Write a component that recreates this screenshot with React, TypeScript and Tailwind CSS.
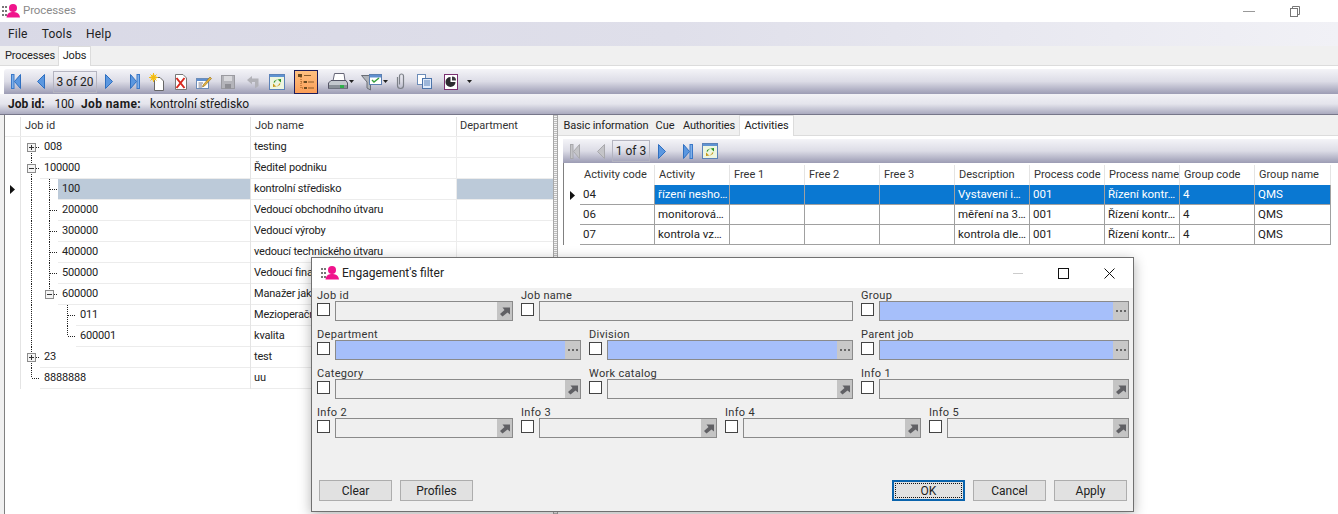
import React from 'react';

// ---------- icons ----------
const AppIcon = () => (
    <svg width="18" height="14" viewBox="0 0 18 14" className="shrink-0">
        <g fill="#777">
            <rect x="0" y="2" width="2" height="2" />
            <rect x="3" y="2" width="2" height="2" />
            <rect x="0" y="6" width="2" height="2" />
            <rect x="3" y="6" width="2" height="2" />
            <rect x="0" y="10" width="2" height="2" />
            <rect x="3" y="10" width="2" height="2" />
        </g>
        <circle cx="11" cy="4" r="4" fill="#f0148c" />
        <path d="M4.5 13.5 C5 9 8 8 11 8 C14 8 17.5 9 18 13.5 Z" fill="#f0148c" />
    </svg>
);

const NavFirst = ({ off }: { off?: boolean }) => (
    <svg width="10" height="15" viewBox="0 0 10 15">
        <rect x="0.5" y="0.5" width="2.5" height="14" fill={off ? '#c4c4c8' : '#7fb0ea'} stroke={off ? '#a8a8ac' : '#3a78c8'} />
        <path d="M9.5 0.5 L3.5 7.5 L9.5 14.5 Z" fill={off ? '#c4c4c8' : '#5b97e0'} stroke={off ? '#a8a8ac' : '#2f6fc0'} />
    </svg>
);
const NavPrev = ({ off }: { off?: boolean }) => (
    <svg width="8" height="15" viewBox="0 0 8 15">
        <path d="M7.5 0.5 L0.5 7.5 L7.5 14.5 Z" fill={off ? '#c4c4c8' : '#5b97e0'} stroke={off ? '#a8a8ac' : '#2f6fc0'} />
    </svg>
);
const NavNext = () => (
    <svg width="8" height="15" viewBox="0 0 8 15">
        <path d="M0.5 0.5 L7.5 7.5 L0.5 14.5 Z" fill="#5b97e0" stroke="#2f6fc0" />
    </svg>
);
const NavLast = () => (
    <svg width="10" height="15" viewBox="0 0 10 15">
        <path d="M0.5 0.5 L6.5 7.5 L0.5 14.5 Z" fill="#5b97e0" stroke="#2f6fc0" />
        <rect x="7" y="0.5" width="2.5" height="14" fill="#7fb0ea" stroke="#3a78c8" />
    </svg>
);
const NewIcon = () => (
    <svg width="16" height="18" viewBox="0 0 16 18">
        <path d="M5.5 4.5 H11 L14.5 8 V17.5 H5.5 Z" fill="#fff" stroke="#666" />
        <circle cx="4.5" cy="4.5" r="3" fill="#f7d23a" />
        <path d="M4.5 0 V9 M0 4.5 H9 M1.5 1.5 L7.5 7.5 M7.5 1.5 L1.5 7.5" stroke="#f2b915" />
    </svg>
);
const DeleteIcon = () => (
    <svg width="13" height="16" viewBox="0 0 13 16">
        <path d="M1.5 0.5 H9 L12.5 4 V15.5 H1.5 Z" fill="#fff" stroke="#777" />
        <path d="M2.5 4 L10.5 14 M10.5 4 L2.5 14" stroke="#d8281e" strokeWidth="2" />
    </svg>
);
const EditIcon = () => (
    <svg width="16" height="14" viewBox="0 0 16 14">
        <rect x="0.5" y="3.5" width="12" height="10" fill="#fff" stroke="#6c8cb8" />
        <rect x="1" y="4" width="11" height="2" fill="#5f8fd0" />
        <path d="M2.5 8 H7 M2.5 10 H6 M2.5 12 H6" stroke="#778" />
        <path d="M7 10 L14 2 L15.5 3.5 L8.5 11 L6.5 12 Z" fill="#e8b43a" stroke="#8a6a20" strokeWidth="0.6" />
    </svg>
);
const SaveIcon = () => (
    <svg width="14" height="14" viewBox="0 0 14 14">
        <rect x="0.5" y="0.5" width="13" height="13" fill="#b4b4ba" stroke="#9a9aa0" />
        <rect x="3" y="1" width="8" height="5" fill="#d8d8dc" />
        <rect x="4" y="9" width="6" height="4.5" fill="#8e8e94" />
    </svg>
);
const UndoIcon = () => (
    <svg width="14" height="14" viewBox="0 0 14 14">
        <path d="M1 5 L6 1 V3.5 H12.5 V11 L9 13.5 V7 H6 V9.5 Z" fill="#b2b2b8" />
    </svg>
);
const RefreshIcon = () => (
    <svg width="16" height="16" viewBox="0 0 16 16">
        <rect x="0.5" y="0.5" width="15" height="15" fill="#eef6e0" stroke="#5b82b8" />
        <rect x="1" y="1" width="14" height="2" fill="#5f93d2" />
        <path d="M4.5 8.5 A3.5 3.5 0 0 1 10 6.5 L8.5 5.5 L12 5 L12 8.5 L10.8 7.5 A2.5 2.5 0 0 0 6 8.5 Z" fill="#2e9428" />
        <path d="M11.5 9.5 A3.5 3.5 0 0 1 6 11.5 L7.5 12.5 L4 13 L4 9.5 L5.2 10.5 A2.5 2.5 0 0 0 10 9.5 Z" fill="#c89a18" />
    </svg>
);
const TreeIcon = () => (
    <svg width="20" height="20" viewBox="0 0 20 20">
        <path d="M5 5 V16 H8 M5 10 H8" stroke="#9a5a20" strokeDasharray="1 1" fill="none" />
        <rect x="2" y="2" width="4" height="3" fill="#6a4a20" />
        <rect x="8" y="9" width="3" height="2" fill="#6a4a20" />
        <rect x="8" y="15" width="3" height="2" fill="#6a4a20" />
        <path d="M8 3.5 H15 M12 10 H18 M12 16 H18" stroke="#8a5a28" />
    </svg>
);
const PrinterIcon = () => (
    <svg width="20" height="17" viewBox="0 0 20 17">
        <path d="M6.5 0.5 H16 L17 8 H5 Z" fill="#fff" stroke="#667" />
        <path d="M3 7.5 H18 L19.5 10 V15.5 H0.5 V10 Z" fill="#c4c8ce" stroke="#556" />
        <rect x="1" y="12" width="18" height="3.5" fill="#8a9098" />
        <rect x="12" y="12" width="4" height="3" fill="#2fb04a" />
    </svg>
);
const FilterIcon = () => (
    <svg width="22" height="18" viewBox="0 0 22 18">
        <path d="M0.5 2.5 H15 L9.5 9 V17 L6 15 V9 Z" fill="#b0b4ba" stroke="#6a6e76" />
        <rect x="8.5" y="1.5" width="12" height="10" fill="#fff" stroke="#5b7fb0" />
        <rect x="9" y="2" width="11" height="2.5" fill="#5f8fd0" />
        <path d="M11 7 L13 9 L18 5" stroke="#35a03a" strokeWidth="1.4" fill="none" />
    </svg>
);
const ClipIcon = () => (
    <svg width="9" height="17" viewBox="0 0 9 17">
        <path d="M1.5 4 V12.5 A3 3 0 0 0 7.5 12.5 V3 A2 2 0 0 0 3.5 3 V11.5" fill="none" stroke="#7c8088" strokeWidth="1.2" />
    </svg>
);
const CopyIcon = () => (
    <svg width="15" height="15" viewBox="0 0 15 15">
        <rect x="0.5" y="0.5" width="8" height="10" fill="#fff" stroke="#6c8cb8" />
        <rect x="5.5" y="4.5" width="9" height="10" fill="#dfeafa" stroke="#4c74aa" />
        <path d="M7 7 H13 M7 9 H13 M7 11 H13" stroke="#5b82b8" />
    </svg>
);
const PieIcon = () => (
    <svg width="14" height="16" viewBox="0 0 14 16">
        <rect x="0.5" y="0.5" width="13" height="15" fill="#fff" stroke="#7a2f70" />
        <path d="M6.5 3 A5 5 0 1 0 11.5 8 H6.5 Z" fill="#2c2c30" />
        <path d="M8 2.5 A4 4 0 0 1 12 6.5 H8 Z" fill="#3c3c40" />
    </svg>
);
const Caret = () => (
    <svg width="5" height="3" viewBox="0 0 5 3" className="shrink-0">
        <path d="M0 0 H5 L2.5 3 Z" fill="#222" />
    </svg>
);
const RowMark = () => (
    <svg width="5" height="9" viewBox="0 0 5 9">
        <path d="M0 0 L5 4.5 L0 9 Z" fill="#111" />
    </svg>
);
const PickArrow = () => (
    <svg width="12" height="11" viewBox="0 0 12 11">
        <path d="M1 8 L5.5 4 L3.5 1.5 H11 V8.5 L8.5 6.5 L3.5 10.5 Z" fill="#606064" />
    </svg>
);
const CloseGlyph = () => (
    <svg width="11" height="11" viewBox="0 0 11 11">
        <path d="M0.5 0.5 L10.5 10.5 M10.5 0.5 L0.5 10.5" stroke="#111" />
    </svg>
);
const RestoreGlyph = () => (
    <svg width="10" height="11" viewBox="0 0 10 11">
        <path d="M2.5 2.5 V0.5 H9.5 V8.5 H7.5" fill="none" stroke="#777" />
        <rect x="0.5" y="2.5" width="7" height="8" fill="none" stroke="#777" />
    </svg>
);

// ---------- toolbar bits ----------
const barBg = 'bg-gradient-to-b from-[#f4f4f8] via-[#dcdce6] to-[#9c9cb4]';

const Pager = ({ text, width }: { text: string; width: string }) => (
    <div className={`flex h-[22px] items-center justify-center whitespace-nowrap border border-[#b4b4c0] text-[12px] text-[#222] ${width}`}>{text}</div>
);

// ---------- tree grid ----------
type TreeRow = {
    id: string;
    name: string;
    level: number;
    lines: number[]; // x of vertical guide lines running through the row
    box?: '+' | '-';
    end?: number; // guide ending at the middle of the row
    start?: number; // guide starting at the middle of the row
};

const treeRows: TreeRow[] = [
    { id: '008', name: 'testing', level: 0, lines: [], start: 10, box: '+' },
    { id: '100000', name: 'Ředitel podniku', level: 0, lines: [10], start: 28, box: '-' },
    { id: '100', name: 'kontrolní středisko', level: 1, lines: [10, 28] },
    { id: '200000', name: 'Vedoucí obchodního útvaru', level: 1, lines: [10, 28] },
    { id: '300000', name: 'Vedoucí výroby', level: 1, lines: [10, 28] },
    { id: '400000', name: 'vedoucí technického útvaru', level: 1, lines: [10, 28] },
    { id: '500000', name: 'Vedoucí finančního útvaru', level: 1, lines: [10, 28] },
    { id: '600000', name: 'Manažer jakosti', level: 1, lines: [10], end: 28, box: '-' },
    { id: '011', name: 'Mezioperační kontrola', level: 2, lines: [10, 46] },
    { id: '600001', name: 'kvalita', level: 2, lines: [10], end: 46 },
    { id: '23', name: 'test', level: 0, lines: [10], box: '+' },
    { id: '8888888', name: 'uu', level: 0, lines: [], end: 10 },
];

const TreeGuide = ({ row }: { row: TreeRow }) => {
    const w = 19 + row.level * 18;
    const x = 10 + row.level * 18;
    return (
        <svg width={w} height="21" viewBox={`0 0 ${w} 21`} className="shrink-0">
            <g stroke="#222" strokeDasharray="1 1" fill="none" shapeRendering="crispEdges">
                {row.lines.map((l) => (
                    <path key={l} d={`M${l}.5 0 V21`} />
                ))}
                {row.end !== undefined && <path d={`M${row.end}.5 0 V10`} />}
                {row.start !== undefined && <path d={`M${row.start}.5 10 V21`} />}
                <path d={`M${x}.5 10.5 H${w}`} />
            </g>
            {row.box && (
                <g shapeRendering="crispEdges">
                    <rect x={x - 4 + 0.5} y="6.5" width="8" height="8" fill="#f4f4f4" stroke="#8c8c8c" />
                    <path d={`M${x - 2} 10.5 H${x + 3}`} stroke="#333" />
                    {row.box === '+' && <path d={`M${x}.5 8 V13`} stroke="#333" />}
                </g>
            )}
        </svg>
    );
};

// ---------- activities grid ----------
const actCols = ['Activity code', 'Activity', 'Free 1', 'Free 2', 'Free 3', 'Description', 'Process code', 'Process name', 'Group code', 'Group name'];
const actRows = [
    ['04', 'řízení nesho…', '', '', '', 'Vystavení i…', '001', 'Řízení kontr…', '4', 'QMS'],
    ['06', 'monitorová…', '', '', '', 'měření na 3…', '001', 'Řízení kontr…', '4', 'QMS'],
    ['07', 'kontrola vz…', '', '', '', 'kontrola dle…', '001', 'Řízení kontr…', '4', 'QMS'],
];

// ---------- dialog ----------
const Field = ({ label, width, kind }: { label: string; width: string; kind: 'arrow' | 'dots' | 'none' }) => (
    <div className={`flex flex-col ${width}`}>
        <div className="h-[13px] whitespace-nowrap text-[11px] leading-[15px] tracking-[0.3px] text-[#333]">{label}</div>
        <div className="flex h-[20px] gap-[5px]">
            <div className="mt-[2px] h-[13px] w-[13px] shrink-0 border border-[#444] bg-white" />
            <div className={`flex h-[20px] min-w-0 flex-1 justify-end border border-[#8a8a8a] ${kind === 'dots' ? 'bg-[#a6bffa]' : 'bg-[#efefef]'}`}>
                {kind === 'arrow' && (
                    <div className="flex w-[15px] items-center justify-center bg-[#c4c4c4]">
                        <PickArrow />
                    </div>
                )}
                {kind === 'dots' && (
                    <div className="flex w-[15px] items-center justify-center gap-[2px] bg-[#c8c8c8]">
                        <span className="h-[2px] w-[2px] bg-[#666]" />
                        <span className="h-[2px] w-[2px] bg-[#666]" />
                        <span className="h-[2px] w-[2px] bg-[#666]" />
                    </div>
                )}
            </div>
        </div>
    </div>
);

const DlgButton = ({ children }: { children: React.ReactNode }) => (
    <button className="h-[21px] w-[73px] border border-[#adadad] bg-[#e1e1e1] text-[12px] leading-none text-[#222]">{children}</button>
);

const FilterDialog = () => (
    <div className="absolute left-[311px] top-[257px] flex h-[255px] w-[823px] flex-col border border-[#707070] bg-[#f0f0f0] shadow-[0_3px_12px_rgba(0,0,0,0.3)]">
        <div className="flex h-[30px] shrink-0 items-center bg-white pl-[9px] pr-[18px]">
            <AppIcon />
            <span className="ml-[3px] text-[12px] text-[#222]">Engagement's filter</span>
            <div className="ml-auto flex items-center gap-[35px]">
                <div className="h-px w-[10px] bg-[#ccc]" />
                <div className="h-[11px] w-[11px] border border-[#111]" />
                <CloseGlyph />
            </div>
        </div>
        <div className="flex flex-col gap-[6px] pl-[5px]">
            <div className="flex gap-2">
                <Field label="Job id" width="w-[196px]" kind="arrow" />
                <Field label="Job name" width="w-[332px]" kind="none" />
                <Field label="Group" width="w-[268px]" kind="dots" />
            </div>
            <div className="flex gap-2">
                <Field label="Department" width="w-[264px]" kind="dots" />
                <Field label="Division" width="w-[264px]" kind="dots" />
                <Field label="Parent job" width="w-[268px]" kind="dots" />
            </div>
            <div className="flex gap-2">
                <Field label="Category" width="w-[264px]" kind="arrow" />
                <Field label="Work catalog" width="w-[264px]" kind="arrow" />
                <Field label="Info 1" width="w-[268px]" kind="arrow" />
            </div>
            <div className="flex gap-2">
                <Field label="Info 2" width="w-[196px]" kind="arrow" />
                <Field label="Info 3" width="w-[196px]" kind="arrow" />
                <Field label="Info 4" width="w-[196px]" kind="arrow" />
                <Field label="Info 5" width="w-[200px]" kind="arrow" />
            </div>
        </div>
        <div className="mt-auto mb-[10px] flex pl-[7px] pr-[6px]">
            <div className="flex gap-2">
                <DlgButton>Clear</DlgButton>
                <DlgButton>Profiles</DlgButton>
            </div>
            <div className="ml-auto flex gap-2">
                <button className="flex h-[21px] w-[73px] items-center justify-center border-2 border-[#0a64ad] bg-[#e1e1e1] p-px text-[12px] leading-none text-[#222]">
                    <span className="flex h-full w-full items-center justify-center border border-dotted border-[#111]">OK</span>
                </button>
                <DlgButton>Cancel</DlgButton>
                <DlgButton>Apply</DlgButton>
            </div>
        </div>
    </div>
);

export default function App() {
    return (
        <div className="relative flex h-[514px] w-[1338px] flex-col overflow-hidden bg-white [font-family:Roboto,sans-serif]">
            {/* Title bar */}
            <div className="flex h-[22px] shrink-0 items-center pl-[2px]">
                <AppIcon />
                <span className="ml-[3px] text-[11.5px] tracking-[-0.1px] text-[#8a8a8a]">Processes</span>
                <div className="ml-auto flex items-center pr-[38px]">
                    <div className="mr-[35px] h-px w-[12px] bg-[#999]" />
                    <RestoreGlyph />
                </div>
            </div>

            {/* Menu */}
            <div className="flex h-[24px] shrink-0 items-center gap-[14px] bg-gradient-to-r from-[#d9d9e6] via-[#dfdfea] to-[#f1f1f6] pl-[8px] text-[12px] tracking-[0.2px] text-[#222]">
                <span>File</span>
                <span>Tools</span>
                <span>Help</span>
            </div>

            {/* Document tabs */}
            <div className="flex h-[20px] shrink-0 items-end border-b border-[#dcdcdc] bg-[#f0f0f0] pl-[2px] text-[11px] tracking-[-0.15px] text-[#222]">
                <div className="flex h-[18px] w-[56px] items-center justify-center whitespace-nowrap">Processes</div>
                <div className="-mb-px flex h-[20px] w-[33px] items-center justify-center border-x border-t border-[#dcdcdc] bg-white">Jobs</div>
            </div>

            {/* Main toolbar */}
            <div className={`mt-[3px] ml-[4px] flex h-[25px] shrink-0 items-center rounded-tl-[3px] ${barBg}`}>
                <div className="ml-[7px] flex items-center gap-[16px]">
                    <NavFirst />
                    <NavPrev />
                </div>
                <div className="ml-[8px]">
                    <Pager text="3 of 20" width="w-[44px]" />
                </div>
                <div className="ml-[8px] flex items-center gap-[17px]">
                    <NavNext />
                    <NavLast />
                </div>
                <div className="ml-[9px] flex items-center gap-[9px]">
                    <NewIcon />
                    <DeleteIcon />
                    <EditIcon />
                    <SaveIcon />
                </div>
                <div className="ml-[11px] flex items-center gap-[9px]">
                    <UndoIcon />
                    <RefreshIcon />
                </div>
                <div className="ml-[9px] flex h-[24px] w-[24px] items-center justify-center border border-[#1c1c5a] bg-gradient-to-b from-[#fdc080] to-[#fb9e58]">
                    <TreeIcon />
                </div>
                <div className="ml-[10px] flex items-center gap-[1px]">
                    <PrinterIcon />
                    <Caret />
                </div>
                <div className="ml-[7px] flex items-center">
                    <FilterIcon />
                    <Caret />
                </div>
                <div className="ml-[8px] flex items-center gap-[12px]">
                    <ClipIcon />
                    <CopyIcon />
                    <PieIcon />
                </div>
                <div className="ml-[9px]">
                    <Caret />
                </div>
            </div>

            {/* Job info strip */}
            <div className="flex h-[21px] shrink-0 items-center border-b border-[#77778a] bg-gradient-to-b from-[#f2f2f6] via-[#e4e4ec] to-[#aaaabf] pl-[8px] text-[12px] text-[#1a1a1a]">
                <b className="font-bold">Job id:</b>
                <span className="ml-[10px] tracking-[-0.3px]">100</span>
                <b className="ml-[7px] font-bold tracking-[0.4px]">Job name:</b>
                <span className="ml-[9px]">kontrolní středisko</span>
            </div>

            <div className="flex min-h-0 flex-1">
                {/* Tree panel */}
                <div className="flex w-[553px] shrink-0 border-l-[4px] border-l-[#f0f0f0]">
                    <div className="flex w-full flex-col border-l border-l-[#808080]">
                        <div className="flex h-[22px] border-b border-[#ececec] pt-[2px] text-[11px] text-[#333]">
                            <div className="w-[16px] shrink-0 border-r border-[#e4e4e4]" />
                            <div className="flex w-[230px] shrink-0 items-center border-r border-[#e4e4e4] pl-[4px]">Job id</div>
                            <div className="flex w-[206px] shrink-0 items-center border-r border-[#e4e4e4] pl-[4px]">Job name</div>
                            <div className="flex flex-1 items-center pl-[3px]">Department</div>
                        </div>
                        {treeRows.map((row) => {
                            const selected = row.id === '100';
                            return (
                                <div key={row.id} className="flex h-[21px] text-[11px] tracking-[-0.18px] text-[#222]">
                                    <div className="flex w-[16px] shrink-0 items-center justify-center border-r border-[#e4e4e4]">
                                        {selected && <RowMark />}
                                    </div>
                                    <div className="flex w-[230px] shrink-0 border-r border-[#e4e4e4]">
                                        <TreeGuide row={row} />
                                        <div className={`flex flex-1 items-center border-b border-[#ececec] pl-[4px] pt-px ${selected ? 'bg-[#bccad9]' : ''}`}>{row.id}</div>
                                    </div>
                                    <div className="flex w-[206px] shrink-0 items-center overflow-hidden whitespace-nowrap border-b border-r border-[#ececec] pl-[3px] pt-px">{row.name}</div>
                                    <div className={`flex-1 border-b border-[#ececec] ${selected ? 'bg-[#bccad9]' : ''}`} />
                                </div>
                            );
                        })}
                    </div>
                </div>

                {/* Splitter */}
                <div className="w-[5px] shrink-0 border-x border-[#a8a8a8] bg-[repeating-linear-gradient(0deg,#bdbdbd_0,#bdbdbd_1px,#f4f4f4_1px,#f4f4f4_2px)]" />

                {/* Details panel */}
                <div className="flex min-w-0 flex-1 flex-col">
                    <div className="flex h-[21px] shrink-0 items-end border-b border-[#dcdcdc] bg-[#f0f0f0] pl-[3px] text-[11px] tracking-[-0.1px] text-[#222]">
                        <div className="flex h-[19px] w-[90px] items-center justify-center whitespace-nowrap pt-[2px]">Basic information</div>
                        <div className="flex h-[19px] w-[28px] items-center justify-center pt-[2px]">Cue</div>
                        <div className="flex h-[19px] w-[60px] items-center justify-center pt-[2px]">Authorities</div>
                        <div className="-mb-px flex h-[21px] w-[55px] items-center justify-center border-x border-t border-[#dcdcdc] bg-white">Activities</div>
                    </div>
                    <div className={`mt-[3px] ml-[5px] flex h-[24px] shrink-0 items-center ${barBg}`}>
                        <div className="ml-[7px] flex items-center gap-[17px]">
                            <NavFirst off />
                            <NavPrev off />
                        </div>
                        <div className="ml-[7px]">
                            <Pager text="1 of 3" width="w-[38px]" />
                        </div>
                        <div className="ml-[8px] flex items-center gap-[17px]">
                            <NavNext />
                            <NavLast />
                        </div>
                        <div className="ml-[9px]">
                            <RefreshIcon />
                        </div>
                    </div>
                    <div className="ml-[5px] flex w-[770px] flex-col border-l border-[#808080]">
                        <div className="flex h-[22px] pt-[2px] text-[11px] text-[#333]">
                            <div className="w-[16px] shrink-0" />
                            {actCols.map((c, j) => (
                                <div key={c} className={`flex shrink-0 items-center overflow-hidden whitespace-nowrap border-r border-[#e4e4e4] pl-[4px] ${j === 9 ? 'w-[76px]' : 'w-[75px]'}`}>{c}</div>
                            ))}
                        </div>
                        {actRows.map((r, i) => (
                            <div key={r[0]} className="flex h-[20px] text-[11.5px] text-[#222]">
                                <div className="flex w-[16px] shrink-0 items-center justify-center">{i === 0 && <RowMark />}</div>
                                {r.map((v, j) => (
                                    <div
                                        key={j}
                                        className={`flex shrink-0 items-center overflow-hidden whitespace-nowrap border-b border-r border-[#a0a0a0] pl-[3px] ${j === 9 ? 'w-[76px]' : 'w-[75px]'} ${i === 0 && j > 0 ? 'bg-[#0a78d2] text-white' : ''}`}
                                    >
                                        {v}
                                    </div>
                                ))}
                            </div>
                        ))}
                    </div>
                </div>
            </div>

            <FilterDialog />
        </div>
    );
}
